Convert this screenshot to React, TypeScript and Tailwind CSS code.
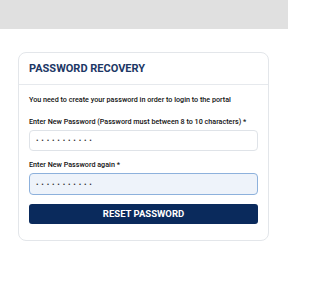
import React, { useState } from "react";

const font = { fontFamily: "Roboto, 'Liberation Sans', sans-serif" };

const App = () => {
  const [first, setFirst] = useState("•••••••••••");
  const [second, setSecond] = useState("•••••••••••");

  return (
    <div className="w-[288px] h-[288px] bg-white" style={font}>
      <div className="h-[29px] bg-[#e0e0e0]" />
      <div className="mx-[18px] mt-[23px] w-[251px] rounded-[8px] border border-[#e3e6ea] bg-white">
        <div className="h-[32px] flex items-center px-[10px] border-b border-[#e6e9ed]">
          <h1 className="text-[11px] font-bold text-[#1c3765] leading-none">
            PASSWORD RECOVERY
          </h1>
        </div>
        <div className="px-[10px] pt-[9px] pb-[16px]">
          <p className="text-[7.2px] font-medium text-[#111] leading-[12px]">
            You need to create your password in order to login to the portal
          </p>
          <label className="block mt-[10px] text-[7.2px] font-medium text-[#111] leading-[12px]">
            Enter New Password (Password must between 8 to 10 characters) *
          </label>
          <input
            type="text"
            value={first}
            onChange={(e) => setFirst(e.target.value)}
            className="mt-[2px] block w-full h-[21px] rounded-[4px] border border-[#dfe3e8] bg-white px-[6px] text-[7.5px] tracking-[2.8px] text-[#333] outline-none"
          />
          <label className="block mt-[8px] text-[7.2px] font-medium text-[#111] leading-[12px]">
            Enter New Password again *
          </label>
          <input
            type="text"
            value={second}
            onChange={(e) => setSecond(e.target.value)}
            className="mt-[2px] block w-full h-[22px] rounded-[4px] border border-[#8db1dc] bg-[#eef3fa] px-[6px] text-[7.5px] tracking-[2.8px] text-[#333] outline-none"
          />
          <button className="mt-[9px] w-full h-[20px] rounded-[3px] bg-[#0a2a5c] text-white text-[9.5px] font-bold">
            RESET PASSWORD
          </button>
        </div>
      </div>
    </div>
  );
};

export default App;
